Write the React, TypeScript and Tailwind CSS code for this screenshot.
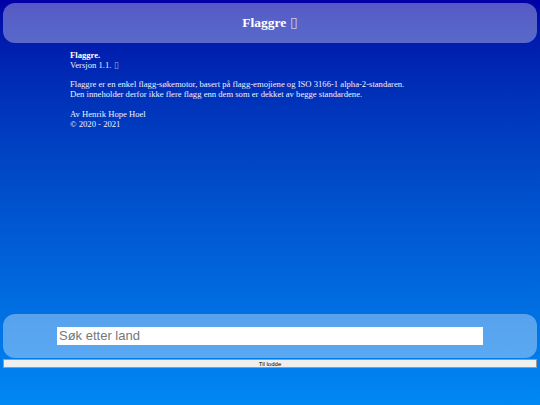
export default function App() {
  return (
    <div className="flex h-[405px] flex-col bg-gradient-to-b from-[#0000a6] to-[#0088f4] font-['Liberation_Serif',serif] text-white">
      <header className="mx-[3px] mt-[3px] flex h-[40px] items-center justify-center rounded-[12px] bg-white/[0.34]">
        <h1 className="text-[13.5px] font-bold">
          Flaggre <span className="font-normal text-white/70">▯</span>
        </h1>
      </header>

      <main className="mt-[8px] flex-1 pl-[70px] text-[8.65px] leading-[9.8px] text-[#eef0ff]">
        <p>
          <b className="text-white">Flaggre.</b>
          <br />
          Versjon 1.1. <span className="text-white/60">▯</span>
        </p>
        <p className="mt-[9.8px]">
          Flaggre er en enkel flagg-søkemotor, basert på flagg-emojiene og ISO 3166-1 alpha-2-standaren.
          <br />
          Den inneholder derfor ikke flere flagg enn dem som er dekket av begge standardene.
        </p>
        <p className="mt-[9.8px]">
          Av Henrik Hope Hoel
          <br />© 2020 - 2021
        </p>
      </main>

      <section className="mx-[3px] flex h-[44px] items-center justify-center rounded-[12px] bg-white/[0.35]">
        <input
          type="text"
          placeholder="Søk etter land"
          className="h-[18px] w-[426px] bg-white px-[2px] font-['Liberation_Sans',sans-serif] text-[13px] text-black outline-none placeholder:text-[#777]"
        />
      </section>
      <button
        type="button"
        className="mx-[3px] mb-[37px] mt-px h-[9px] border border-[#9a9a9a] bg-[#efefef] font-['Liberation_Sans',sans-serif] text-[6px] leading-none text-black"
      >
        Til lodde
      </button>
    </div>
  );
}
